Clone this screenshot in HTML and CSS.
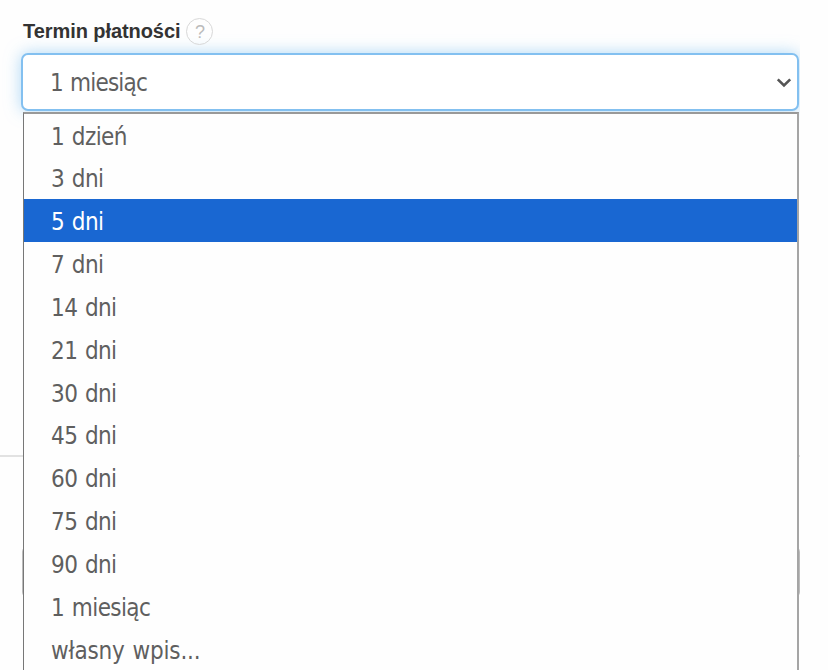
FILE: index.html
```
<!DOCTYPE html>
<html lang="pl">
<head>
    <meta charset="UTF-8">
    <meta name="viewport" content="width=device-width, initial-scale=1.0">
    <title>Termin płatności</title>
    <link rel="stylesheet" href="styles.css">
</head>
<body>

<div class="form">
    <div class="label-row">
        <span class="label">Termin płatności</span>
        <span class="help">?</span>
    </div>

    <div class="select">
        <span class="value">1 miesiąc</span>
        <svg class="arrow" width="16" height="11" viewBox="0 0 16 11">
            <path d="M1.8 2.3 L8 8.5 L14.2 2.3" fill="none" stroke="#555" stroke-width="2.6"/>
        </svg>
    </div>

    <div class="below">
        <div class="divider"></div>
        <div class="next-field"></div>
    </div>

    <ul class="options">
        <li>1 dzień</li>
        <li>3 dni</li>
        <li class="active">5 dni</li>
        <li>7 dni</li>
        <li>14 dni</li>
        <li>21 dni</li>
        <li>30 dni</li>
        <li>45 dni</li>
        <li>60 dni</li>
        <li>75 dni</li>
        <li>90 dni</li>
        <li>1 miesiąc</li>
        <li class="custom">własny wpis...</li>
    </ul>
</div>

</body>
</html>
```

FILE: styles.css
```
* {
    box-sizing: border-box;
}

body {
    margin: 0;
    background-color: #fefefe;
    overflow: hidden;
}

.form {
    position: relative;
    width: 800px;
    height: 670px;
    padding-top: 18px;
    overflow: hidden;
    font-family: Tahoma, "DejaVu Sans Condensed", "DejaVu Sans", sans-serif;
    font-size: 24px;
    color: #5f5f5f;
}

.label-row {
    display: flex;
    align-items: center;
    gap: 6px;
    height: 27px;
    margin: 0 0 8px 23px;
}

.label {
    font-family: Arial, "Liberation Sans", sans-serif;
    font-size: 20px;
    font-weight: bold;
    line-height: 24px;
    letter-spacing: -0.07px;
    color: #333;
    margin-top: -2px;
}

.help {
    width: 27px;
    height: 27px;
    border: 1px solid #d8d8d8;
    border-radius: 50%;
    font-family: Arial, "Liberation Sans", sans-serif;
    font-size: 18px;
    line-height: 26px;
    text-align: center;
    color: #bbb;
}

.select {
    display: flex;
    align-items: center;
    justify-content: space-between;
    width: 778px;
    height: 58px;
    margin-left: 21px;
    padding: 0 5px 0 27px;
    background-color: #fff;
    border: 2px solid #83c0f0;
    border-radius: 7px;
    box-shadow: 0 0 16px rgba(120, 190, 240, 0.6);
}

.value {
    padding-top: 2px;
    letter-spacing: -0.8px;
    word-spacing: 1px;
}

.below {
    padding-top: 344px;
}

.divider {
    height: 2px;
    background-color: #e2e2e2;
}

.next-field {
    height: 52px;
    margin: 89px 0 0 22px;
    border: 2px solid #bbb;
    border-radius: 6px;
}

.options {
    position: absolute;
    top: 112px;
    left: 23px;
    width: 776px;
    height: 600px;
    margin: 0;
    padding: 0;
    list-style: none;
    background-color: #fefefe;
    border: 1px solid #777;
    border-top: 2px solid #999;
    border-right: 2px solid #a5a5a5;
}

.options li {
    height: 42.85px;
    padding-left: 27px;
    line-height: 46px;
    letter-spacing: -0.6px;
    word-spacing: 1.4px;
}

.options li:first-child {
    margin-top: -0.5px;
}

.options .active {
    background-color: #1967d2;
    color: #fff;
}

.options .custom {
    letter-spacing: -0.2px;
}
```
